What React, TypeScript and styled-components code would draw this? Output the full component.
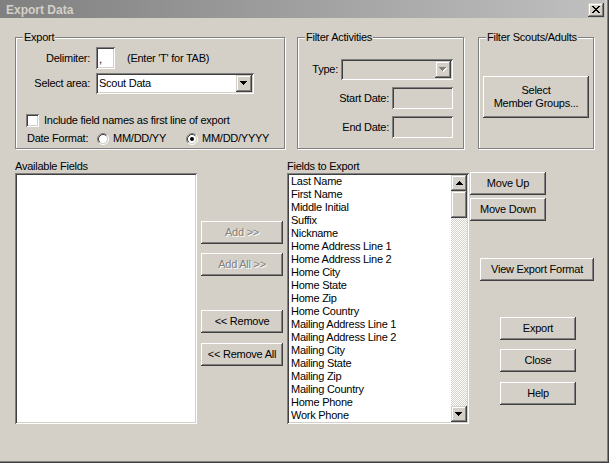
import React from "react";
import styled, { createGlobalStyle, css } from "styled-components";

const FACE = "#D4D0C8";

const GlobalStyle = createGlobalStyle`
  html, body { margin: 0; padding: 0; background: ${FACE}; }
  * { box-sizing: border-box; }
`;

const pushRaised = css`
  background: ${FACE};
  box-shadow: inset -1px -1px #404040, inset 1px 1px #ffffff,
    inset -2px -2px #808080, inset 2px 2px ${FACE};
`;

const edgeRaised = css`
  background: ${FACE};
  box-shadow: inset -1px -1px #404040, inset 1px 1px ${FACE},
    inset -2px -2px #808080, inset 2px 2px #ffffff;
`;

const sunken = css`
  box-shadow: inset 1px 1px #808080, inset -1px -1px #ffffff,
    inset 2px 2px #404040, inset -2px -2px ${FACE};
`;

const Window = styled.div`
  width: 609px;
  height: 463px;
  background: ${FACE};
  display: flex;
  flex-direction: column;
  padding: 0 4px 4px 0;
  box-shadow: inset -1px -1px #404040, inset -2px -2px #808080;
  font-family: "Liberation Sans", Arial, sans-serif;
  font-size: 11px;
  line-height: 13px;
  letter-spacing: -0.25px;
  color: #000;
`;

const TitleBar = styled.div`
  flex: none;
  height: 18px;
  display: flex;
  align-items: center;
  justify-content: space-between;
  padding: 1px 1px 0 6px;
  background: linear-gradient(to right, #808080, #c0c0c0);
`;

const TitleText = styled.span`
  color: ${FACE};
  font-weight: bold;
  font-size: 12px;
  letter-spacing: 0;
  padding-top: 1px;
`;

const CaptionButton = styled.div`
  ${edgeRaised};
  width: 16px;
  height: 14px;
  display: flex;
  align-items: center;
  justify-content: center;
`;

const Client = styled.div`
  flex: 1;
  display: flex;
  flex-direction: column;
  padding: 19px 0 0 15px;
`;

const TopRow = styled.div`
  display: flex;
  height: 112px;
`;

const Group = styled.div<{ $w: number; $ml?: number }>`
  position: relative;
  width: ${(p) => p.$w}px;
  margin-left: ${(p) => p.$ml ?? 0}px;
  border: 1px solid #808080;
  box-shadow: inset 1px 1px #ffffff, 1px 1px #ffffff;
`;

const Caption = styled.span`
  position: absolute;
  top: -7px;
  left: 7px;
  padding: 0 1px;
  background: ${FACE};
  white-space: nowrap;
`;

const ExportBody = styled.div`
  display: flex;
  flex-direction: column;
  padding-top: 9px;
`;

const FieldRow = styled.div<{ $mt?: number }>`
  display: flex;
  align-items: center;
  gap: 6px;
  margin-top: ${(p) => p.$mt ?? 0}px;
`;

const FieldLabel = styled.span`
  width: 74px;
  text-align: right;
  white-space: nowrap;
`;

const Hint = styled.span`
  margin-left: 6px;
  white-space: nowrap;
`;

const TextBox = styled.div<{ $w: number; $h: number; $disabled?: boolean }>`
  ${sunken};
  width: ${(p) => p.$w}px;
  height: ${(p) => p.$h}px;
  background: ${(p) => (p.$disabled ? FACE : "#ffffff")};
  padding: 4px 3px 2px;
  display: flex;
  align-items: center;
`;

const Combo = styled.div<{ $w: number; $disabled?: boolean }>`
  ${sunken};
  width: ${(p) => p.$w}px;
  height: 21px;
  padding: 2px;
  background: ${(p) => (p.$disabled ? FACE : "#ffffff")};
  display: flex;
  align-items: center;
`;

const ComboText = styled.span`
  flex: 1;
  padding-left: 1px;
  white-space: nowrap;
`;

const ArrowButton = styled.div<{ $h: number }>`
  ${edgeRaised};
  flex: none;
  width: 16px;
  height: ${(p) => p.$h}px;
  display: flex;
  align-items: center;
  justify-content: center;
`;

const OptionRow = styled.label<{ $mt: number; $pl: number }>`
  display: flex;
  align-items: center;
  height: 13px;
  margin-top: ${(p) => p.$mt}px;
  padding-left: ${(p) => p.$pl}px;
  white-space: nowrap;
`;

const CheckBox = styled.span`
  ${sunken};
  flex: none;
  width: 13px;
  height: 13px;
  background: #ffffff;
  margin-right: 5px;
`;

const RowLabel = styled.span<{ $w: number }>`
  width: ${(p) => p.$w}px;
`;

const RadioOption = styled.span<{ $w?: number }>`
  display: flex;
  align-items: center;
  gap: 4px;
  width: ${(p) => (p.$w ? `${p.$w}px` : "auto")};
`;

const FilterBody = styled.div`
  display: flex;
  flex-direction: column;
  align-items: flex-end;
  gap: 7px;
  padding: 21px 10px 0 0;
`;

const InlineRow = styled.div`
  display: flex;
  align-items: center;
  gap: 3px;
  white-space: nowrap;
`;

const ScoutsBody = styled.div`
  display: flex;
  justify-content: center;
  padding-top: 38px;
`;

const BottomArea = styled.div`
  display: flex;
  align-items: flex-start;
  margin-top: 11px;
`;

const ListColumn = styled.div<{ $ml?: number }>`
  display: flex;
  flex-direction: column;
  width: 182px;
  margin-left: ${(p) => p.$ml ?? 0}px;
`;

const ListCaption = styled.span`
  height: 13px;
  white-space: nowrap;
`;

const ListBox = styled.div`
  ${sunken};
  background: #ffffff;
  width: 182px;
  height: 251px;
  padding: 2px;
  display: flex;
`;

const ListItems = styled.div`
  flex: 1;
  padding-left: 2px;
  overflow: hidden;
`;

const ListItem = styled.div`
  height: 13px;
  white-space: nowrap;
`;

const ScrollBar = styled.div`
  width: 16px;
  display: flex;
  flex-direction: column;
  background-color: #ffffff;
  background-image: conic-gradient(${FACE} 25%, #ffffff 0 50%, ${FACE} 0 75%, #ffffff 0);
  background-size: 2px 2px;
`;

const Thumb = styled.div`
  ${edgeRaised};
  height: 27px;
`;

const Spacer = styled.div`
  flex: 1;
`;

const ButtonColumn = styled.div<{ $ml: number; $pt: number; $w?: number }>`
  display: flex;
  flex-direction: column;
  align-items: flex-start;
  margin-left: ${(p) => p.$ml}px;
  padding-top: ${(p) => p.$pt}px;
  width: ${(p) => (p.$w ? `${p.$w}px` : "auto")};
`;

const PushButton = styled.button<{ $w: number; $h?: number; $mt?: number; $ml?: number }>`
  ${pushRaised};
  border: 0;
  padding: 0;
  margin: ${(p) => `${p.$mt ?? 0}px 0 0 ${p.$ml ?? 0}px`};
  width: ${(p) => p.$w}px;
  height: ${(p) => p.$h ?? 23}px;
  font: inherit;
  letter-spacing: inherit;
  line-height: 13px;
  color: #000;
  display: flex;
  flex-direction: column;
  align-items: center;
  justify-content: center;
  white-space: nowrap;
  &:disabled {
    color: #808080;
    text-shadow: 1px 1px #ffffff;
  }
`;

const UpGlyph = ({ color = "#000" }: { color?: string }) => (
  <svg width="7" height="4" viewBox="0 0 7 4" shapeRendering="crispEdges">
    <path d="M3 0h1v1h1v1h1v1h1v1H0V3h1V2h1V1h1z" fill={color} />
  </svg>
);

const DownGlyph = ({ color = "#000", shadow }: { color?: string; shadow?: boolean }) => (
  <svg width="8" height="5" viewBox="0 0 8 5" shapeRendering="crispEdges">
    {shadow && <path d="M1 1h7v1H7v1H6v1H5v1H4V4H3V3H2V2H1z" fill="#ffffff" />}
    <path d="M0 0h7v1H6v1H5v1H4v1H3V3H2V2H1V1H0z" fill={color} />
  </svg>
);

const closePixels: [number, number][] = [
  [0, 0], [1, 0], [6, 0], [7, 0],
  [1, 1], [2, 1], [5, 1], [6, 1],
  [2, 2], [3, 2], [4, 2], [5, 2],
  [3, 3], [4, 3],
  [2, 4], [3, 4], [4, 4], [5, 4],
  [1, 5], [2, 5], [5, 5], [6, 5],
  [0, 6], [1, 6], [6, 6], [7, 6],
];

const CloseGlyph = () => (
  <svg width="8" height="7" viewBox="0 0 8 7" shapeRendering="crispEdges">
    {closePixels.map(([x, y]) => (
      <rect key={`${x}-${y}`} x={x} y={y} width="1" height="1" fill="#000" />
    ))}
  </svg>
);

const RadioGlyph = ({ checked }: { checked?: boolean }) => (
  <svg width="12" height="12" viewBox="0 0 12 12">
    <circle cx="6" cy="6" r="4.2" fill="#ffffff" />
    <path d="M2.11 9.89A5.5 5.5 0 0 1 9.89 2.11" stroke="#808080" fill="none" />
    <path d="M9.89 2.11A5.5 5.5 0 0 1 2.11 9.89" stroke="#ffffff" fill="none" />
    <path d="M2.82 9.18A4.5 4.5 0 0 1 9.18 2.82" stroke="#404040" fill="none" />
    <path d="M9.18 2.82A4.5 4.5 0 0 1 2.82 9.18" stroke={FACE} fill="none" />
    {checked && <circle cx="6" cy="6" r="2" fill="#000" />}
  </svg>
);

const fields = [
  "Last Name",
  "First Name",
  "Middle Initial",
  "Suffix",
  "Nickname",
  "Home Address Line 1",
  "Home Address Line 2",
  "Home City",
  "Home State",
  "Home Zip",
  "Home Country",
  "Mailing Address Line 1",
  "Mailing Address Line 2",
  "Mailing City",
  "Mailing State",
  "Mailing Zip",
  "Mailing Country",
  "Home Phone",
  "Work Phone",
];

export default function App() {
  return (
    <>
      <GlobalStyle />
      <Window>
        <TitleBar>
          <TitleText>Export Data</TitleText>
          <CaptionButton aria-label="Close">
            <CloseGlyph />
          </CaptionButton>
        </TitleBar>
        <Client>
          <TopRow>
            <Group $w={270}>
              <Caption>Export</Caption>
              <ExportBody>
                <FieldRow>
                  <FieldLabel>Delimiter:</FieldLabel>
                  <TextBox $w={19} $h={22}>,</TextBox>
                  <Hint>(Enter 'T' for TAB)</Hint>
                </FieldRow>
                <FieldRow $mt={4}>
                  <FieldLabel>Select area:</FieldLabel>
                  <Combo $w={158}>
                    <ComboText>Scout Data</ComboText>
                    <ArrowButton $h={17}>
                      <DownGlyph />
                    </ArrowButton>
                  </Combo>
                </FieldRow>
                <OptionRow $mt={20} $pl={10}>
                  <CheckBox />
                  Include field names as first line of export
                </OptionRow>
                <OptionRow as="div" $mt={5} $pl={11}>
                  <RowLabel $w={70}>Date Format:</RowLabel>
                  <RadioOption $w={89}>
                    <RadioGlyph />
                    MM/DD/YY
                  </RadioOption>
                  <RadioOption>
                    <RadioGlyph checked />
                    MM/DD/YYYY
                  </RadioOption>
                </OptionRow>
              </ExportBody>
            </Group>

            <Group $w={167} $ml={12}>
              <Caption>Filter Activities</Caption>
              <FilterBody>
                <InlineRow>
                  Type:
                  <Combo $w={112} $disabled>
                    <ComboText />
                    <ArrowButton $h={17}>
                      <DownGlyph color="#808080" shadow />
                    </ArrowButton>
                  </Combo>
                </InlineRow>
                <InlineRow>
                  Start Date:
                  <TextBox $w={61} $h={22} $disabled />
                </InlineRow>
                <InlineRow>
                  End Date:
                  <TextBox $w={61} $h={22} $disabled />
                </InlineRow>
              </FilterBody>
            </Group>

            <Group $w={116} $ml={14}>
              <Caption>Filter Scouts/Adults</Caption>
              <ScoutsBody>
                <PushButton $w={106} $h={42}>
                  <span>Select</span>
                  <span>Member Groups...</span>
                </PushButton>
              </ScoutsBody>
            </Group>
          </TopRow>

          <BottomArea>
            <ListColumn>
              <ListCaption>Available Fields</ListCaption>
              <ListBox />
            </ListColumn>

            <ButtonColumn $ml={4} $pt={61} $w={82}>
              <PushButton $w={82} disabled>Add &gt;&gt;</PushButton>
              <PushButton $w={82} $mt={9} disabled>Add All &gt;&gt;</PushButton>
              <PushButton $w={82} $mt={34}>&lt;&lt; Remove</PushButton>
              <PushButton $w={82} $mt={10}>&lt;&lt; Remove All</PushButton>
            </ButtonColumn>

            <ListColumn $ml={4}>
              <ListCaption>Fields to Export</ListCaption>
              <ListBox>
                <ListItems>
                  {fields.map((f) => (
                    <ListItem key={f}>{f}</ListItem>
                  ))}
                </ListItems>
                <ScrollBar>
                  <ArrowButton $h={16}>
                    <UpGlyph />
                  </ArrowButton>
                  <Thumb />
                  <Spacer />
                  <ArrowButton $h={16}>
                    <DownGlyph />
                  </ArrowButton>
                </ScrollBar>
              </ListBox>
            </ListColumn>

            <ButtonColumn $ml={1} $pt={12}>
              <PushButton $w={76}>Move Up</PushButton>
              <PushButton $w={76} $mt={3}>Move Down</PushButton>
              <PushButton $w={114} $mt={37} $ml={10}>View Export Format</PushButton>
              <PushButton $w={76} $mt={36} $ml={30}>Export</PushButton>
              <PushButton $w={76} $mt={9} $ml={30}>Close</PushButton>
              <PushButton $w={76} $mt={10} $ml={30}>Help</PushButton>
            </ButtonColumn>
          </BottomArea>
        </Client>
      </Window>
    </>
  );
}
